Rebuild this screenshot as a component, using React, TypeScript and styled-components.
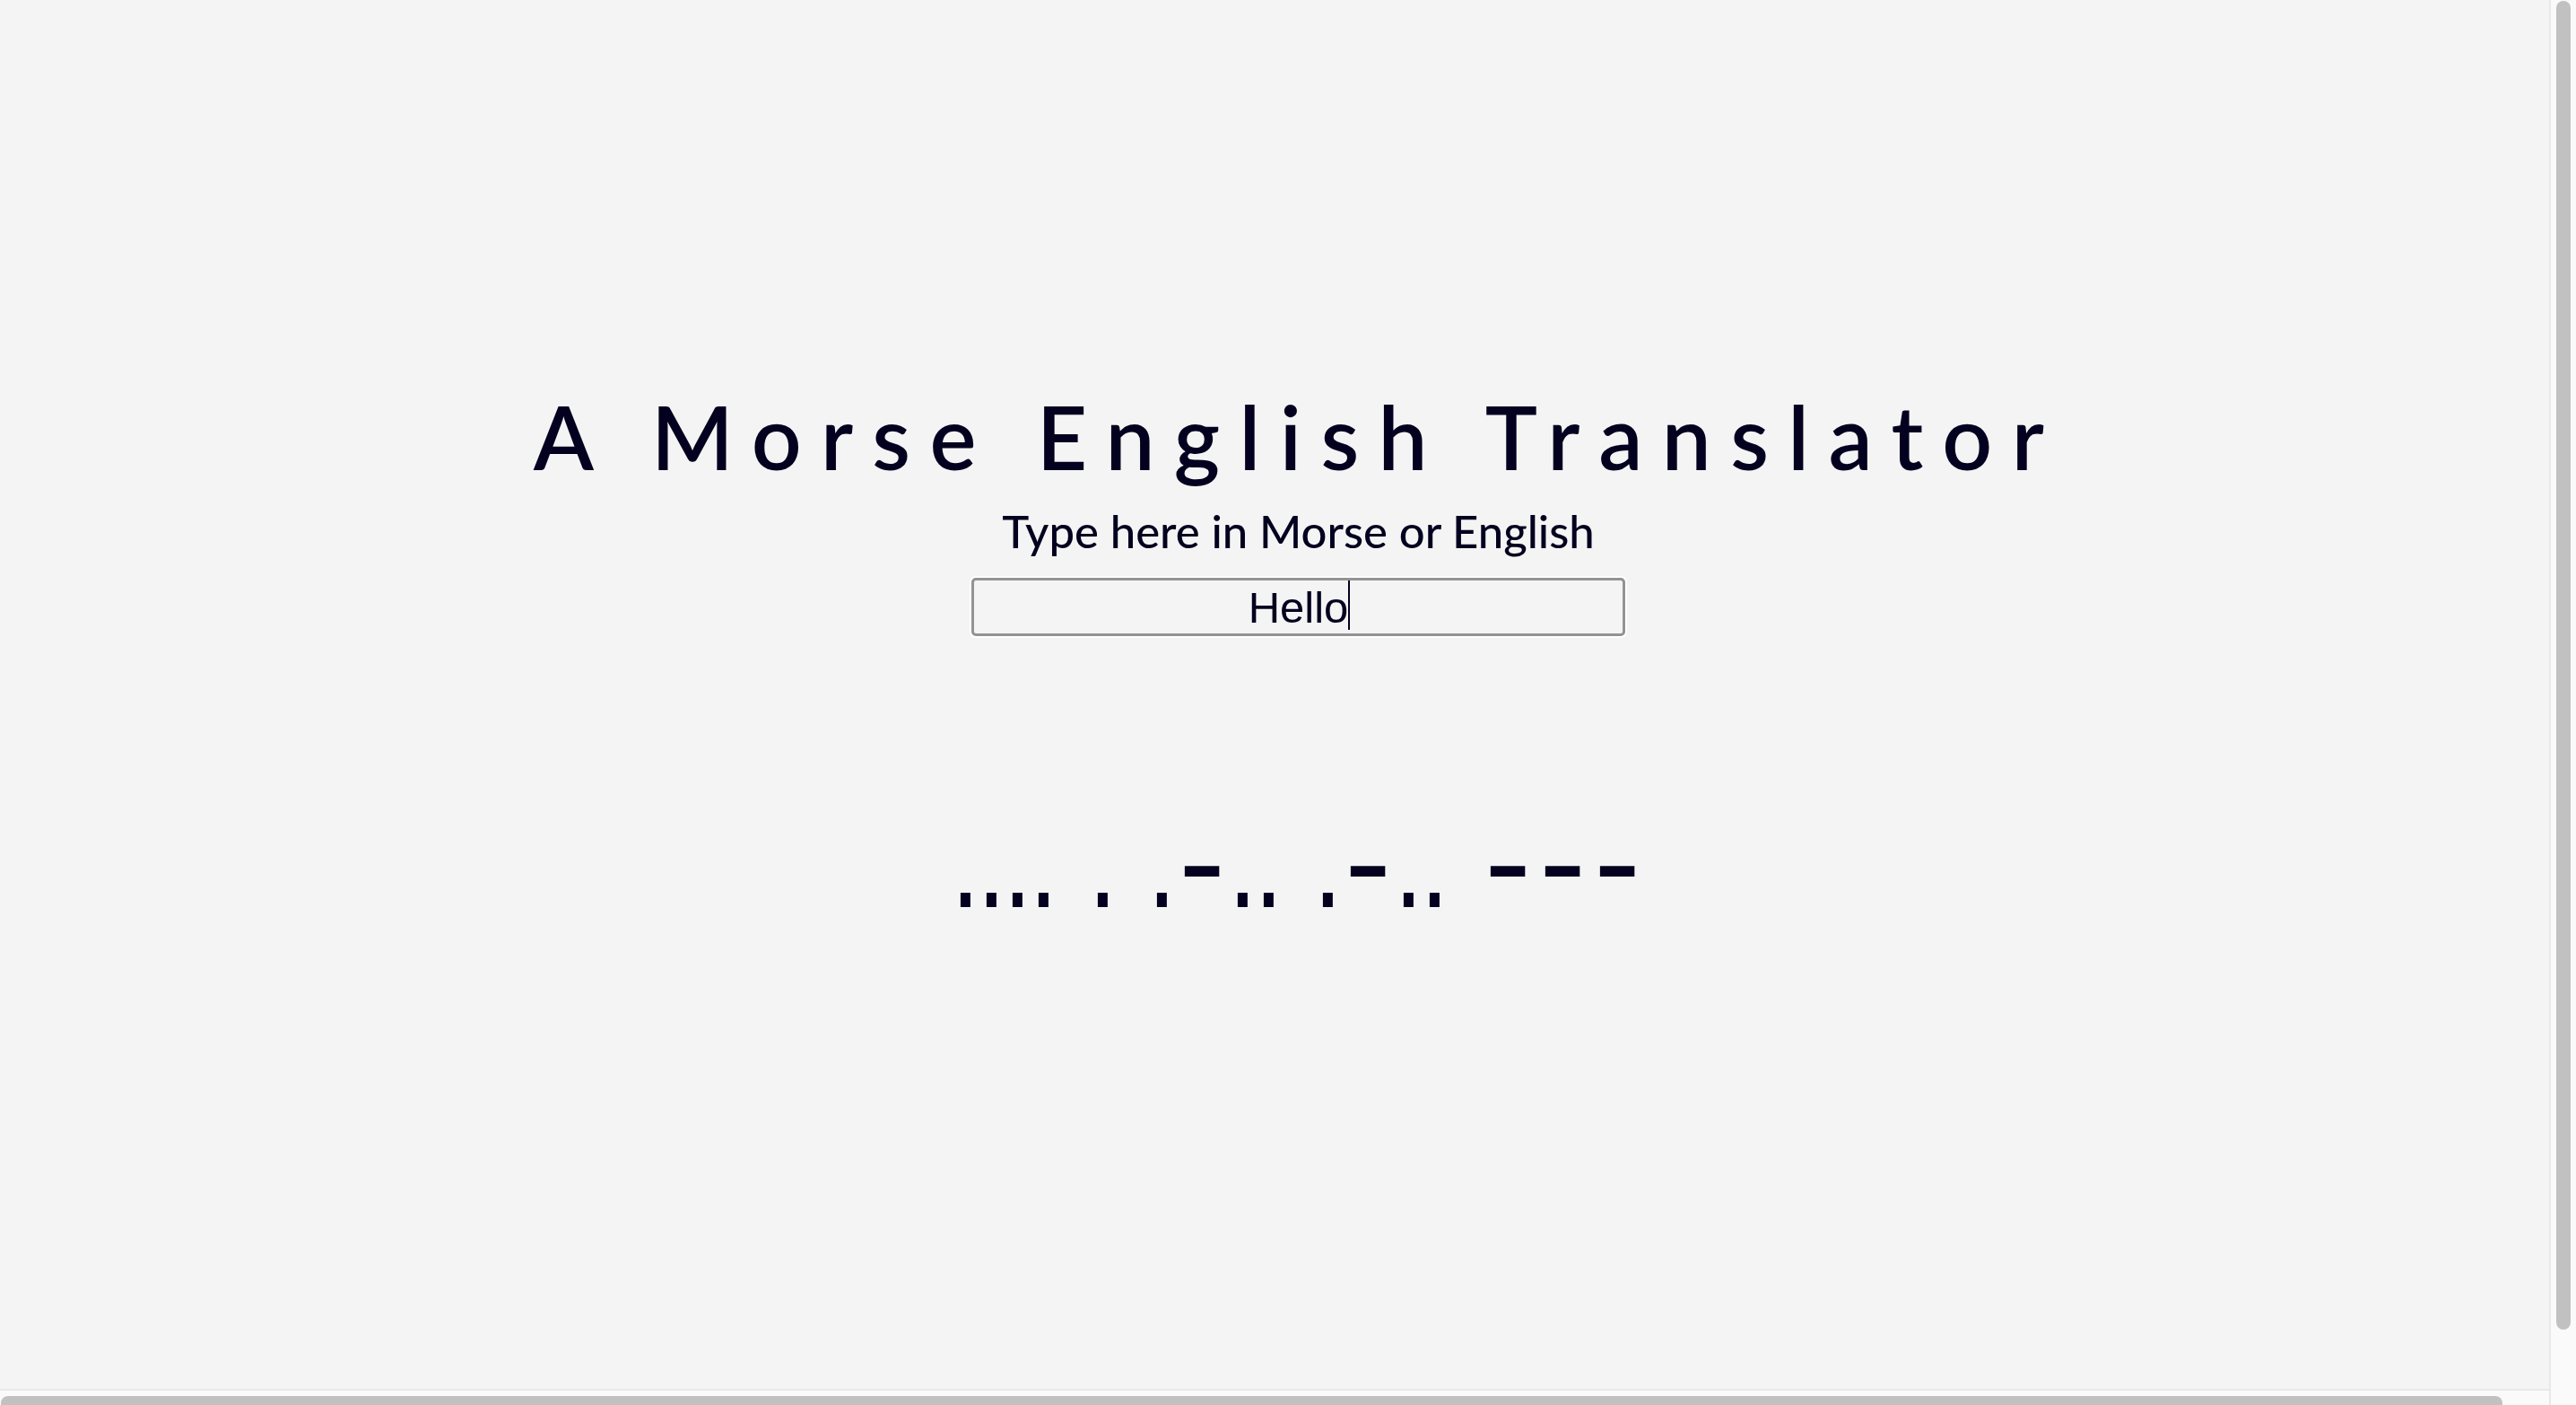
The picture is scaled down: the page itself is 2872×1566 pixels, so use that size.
import React, { useEffect, useMemo, useRef, useState } from "react";
import styled, { createGlobalStyle } from "styled-components";

const GlobalStyle = createGlobalStyle`
  html, body { margin: 0; padding: 0; overflow: hidden; background: #f4f4f4; }
  #root { width: 100vw; height: 100vh; overflow: hidden; }
`;

const Page = styled.main`
  box-sizing: border-box;
  width: 2895px;
  height: 100vh;
  padding-top: 426px;
  display: flex;
  flex-direction: column;
  align-items: center;
  color: #03011f;
  background: #f4f4f4;
`;

const Title = styled.h1`
  margin: 0;
  font-family: Lato, "Open Sans", sans-serif;
  font-weight: 600;
  font-size: 98px;
  line-height: 120px;
  letter-spacing: 21.4px;
`;

const Prompt = styled.p`
  margin: 16px 0 0;
  font-family: Lato, "Open Sans", sans-serif;
  font-weight: 500;
  font-size: 50.8px;
  line-height: 60px;
`;

const FieldWrap = styled.div`
  position: relative;
  margin-top: 22px;
  width: 729px;
  height: 65px;
`;

const Field = styled.input`
  box-sizing: border-box;
  display: block;
  width: 100%;
  height: 100%;
  padding: 0;
  border: 3px solid #939393;
  border-radius: 5px;
  box-shadow: 0 0 0 2px #ffffff;
  background: transparent;
  color: #03011f;
  caret-color: transparent;
  font-family: "Liberation Sans", Arial, sans-serif;
  font-size: 49px;
  text-align: center;
  outline: none;
`;

const Caret = styled.span`
  position: absolute;
  top: 3px;
  width: 2px;
  height: 55px;
  background: #03011f;
  pointer-events: none;
`;

const Output = styled.div`
  margin-top: 178px;
  font-family: "DejaVu Sans", sans-serif;
  font-size: 146px;
  line-height: 1;
  white-space: pre;
`;

type Kind = "dot" | "dash" | "space";
const widths: Record<Kind, number> = { dot: 29, dash: 61, space: 37 };

const Symbol = styled.span<{ $kind: Kind }>`
  display: inline-flex;
  justify-content: center;
  width: ${(p) => widths[p.$kind]}px;
  transform-origin: 50% 123.5px;
  transform: ${(p) => (p.$kind === "dot" ? "scale(0.73, 0.88)" : "none")};
`;

const VScroll = styled.div`
  position: fixed;
  top: 0;
  right: 0;
  box-sizing: border-box;
  width: 30px;
  height: 100vh;
  background: #fafafa;
  border-left: 2px solid #e8e8e8;
`;

const VThumb = styled.div`
  position: absolute;
  top: 1px;
  left: 6px;
  width: 16px;
  height: 1481px;
  border-radius: 8px;
  background: #c1c1c1;
`;

const HScroll = styled.div`
  position: fixed;
  left: 0;
  bottom: 0;
  box-sizing: border-box;
  width: calc(100vw - 30px);
  height: 18px;
  overflow: hidden;
  background: #fafafa;
  border-top: 2px solid #e8e8e8;
`;

const HThumb = styled.div`
  position: absolute;
  top: 6px;
  left: 1px;
  width: 2789px;
  height: 16px;
  border-radius: 8px;
  background: #c1c1c1;
`;

const MORSE: Record<string, string> = {
  a: ".-", b: "-...", c: "-.-.", d: "-..", e: ".", f: "..-.", g: "--.", h: "....",
  i: "..", j: ".---", k: "-.-", l: ".-..", m: "--", n: "-.", o: "---", p: ".--.",
  q: "--.-", r: ".-.", s: "...", t: "-", u: "..-", v: "...-", w: ".--", x: "-..-",
  y: "-.--", z: "--..", "0": "-----", "1": ".----", "2": "..---", "3": "...--",
  "4": "....-", "5": ".....", "6": "-....", "7": "--...", "8": "---..", "9": "----.",
};
const REVERSE: Record<string, string> = Object.fromEntries(
  Object.entries(MORSE).map(([k, v]) => [v, k])
);

function translate(input: string): string {
  const trimmed = input.trim();
  if (!trimmed) return "";
  if (/^[.\-\s/]+$/.test(trimmed)) {
    return trimmed
      .split(/\s*\/\s*/)
      .map((w) => w.split(/\s+/).map((c) => REVERSE[c] ?? "").join(""))
      .join(" ");
  }
  return trimmed
    .toLowerCase()
    .split("")
    .map((c) => (c === " " ? "/" : MORSE[c] ?? ""))
    .filter(Boolean)
    .join(" ");
}

function kindOf(c: string): Kind {
  if (c === ".") return "dot";
  if (c === "-") return "dash";
  return "space";
}

const FIELD_FONT = "49px 'Liberation Sans'";

export default function App() {
  const [value, setValue] = useState("Hello");
  const [fontsReady, setFontsReady] = useState(false);
  const inputRef = useRef<HTMLInputElement>(null);

  useEffect(() => {
    document.fonts.load(FIELD_FONT).finally(() => setFontsReady(true));
    const el = inputRef.current;
    if (el) {
      el.focus();
      el.setSelectionRange(el.value.length, el.value.length);
    }
  }, []);

  const caretLeft = useMemo(() => {
    const ctx = document.createElement("canvas").getContext("2d");
    if (!ctx) return 364.5;
    ctx.font = FIELD_FONT;
    return 364.5 + ctx.measureText(value).width / 2;
  }, [value, fontsReady]);

  const morse = translate(value);

  return (
    <>
      <GlobalStyle />
      <Page>
        <Title>A Morse English Translator</Title>
        <Prompt>Type here in Morse or English</Prompt>
        <FieldWrap>
          <Field
            ref={inputRef}
            value={value}
            aria-label="Type here in Morse or English"
            onChange={(e) => setValue(e.target.value)}
          />
          <Caret style={{ left: caretLeft }} />
        </FieldWrap>
        <Output>
          {morse.split("").map((c, i) => (
            <Symbol key={i} $kind={kindOf(c)}>{c}</Symbol>
          ))}
        </Output>
      </Page>
      <VScroll>
        <VThumb />
      </VScroll>
      <HScroll>
        <HThumb />
      </HScroll>
    </>
  );
}
